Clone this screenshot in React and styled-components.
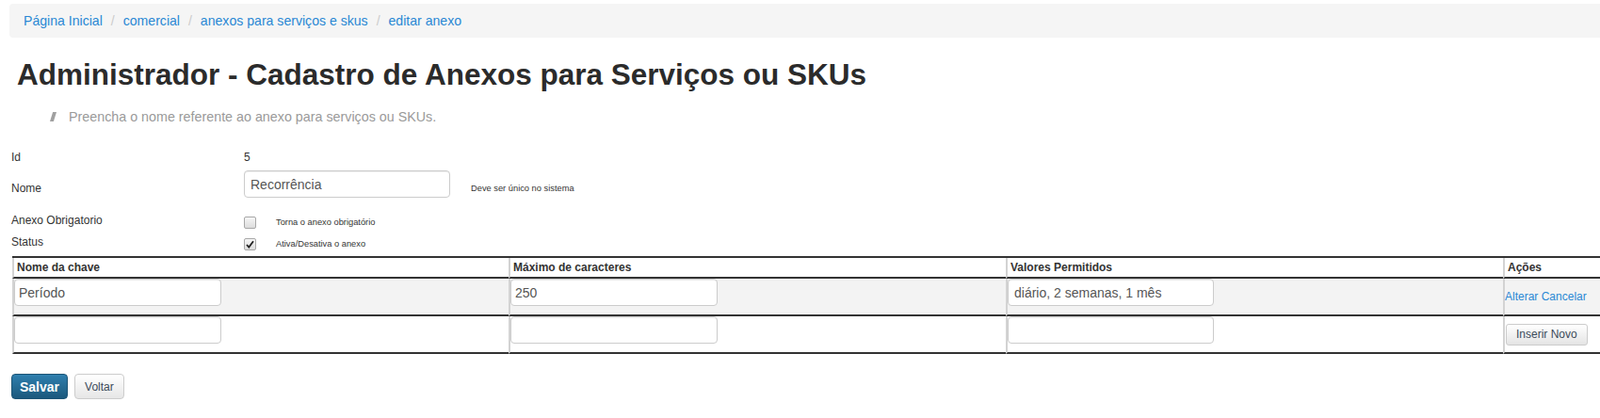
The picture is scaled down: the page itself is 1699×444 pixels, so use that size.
import React from "react";
import styled, { createGlobalStyle } from "styled-components";

const Global = createGlobalStyle`
  html { overflow: hidden; }
  body {
    margin: 0;
    background: #fff;
    font-family: "Liberation Sans", Arial, Helvetica, sans-serif;
    color: #333;
  }
  * { box-sizing: border-box; }
`;

const Page = styled.div`
  width: 2200px;
  padding: 4px 0 20px 10px;
`;

const Breadcrumb = styled.ol`
  list-style: none;
  margin: 0;
  padding: 8px 15px;
  width: 2100px;
  display: flex;
  background: #f5f5f5;
  border-radius: 4px;
  font-size: 14.1px;
  line-height: 20px;
`;

const Crumb = styled.li`
  & + &::before {
    content: "/\\00a0";
    padding: 0 5px 0 9px;
    color: #ccc;
  }
  a {
    color: #2a88d4;
    text-decoration: none;
  }
`;

const Title = styled.h1`
  margin: 22px 0 0;
  padding-left: 8px;
  font-size: 31.5px;
  line-height: 35px;
  font-weight: bold;
  color: #2b2b2b;
`;

const Lead = styled.p`
  margin: 17px 0 0;
  padding-left: 43px;
  display: flex;
  align-items: center;
  font-size: 14.3px;
  line-height: 20px;
  color: #9a9a9a;
`;

const LeadBar = styled.span`
  display: inline-block;
  width: 7px;
  height: 10px;
  margin-right: 13px;
  background: #a0a0a0;
  clip-path: polygon(45% 0, 100% 0, 55% 100%, 0 100%);
`;

const Form = styled.div`
  margin-top: 25px;
  padding-left: 2px;
`;

const FieldRow = styled.div`
  display: flex;
  align-items: ${(p) => p.$align || "flex-end"};
  margin-top: ${(p) => p.$mt || 0}px;
  min-height: 17px;
`;

const Label = styled.div`
  width: 247px;
  flex: none;
  font-size: 12px;
  line-height: 17px;
  margin-bottom: ${(p) => p.$mb || 0}px;
`;

const Value = styled.div`
  display: flex;
  align-items: flex-end;
  gap: ${(p) => p.$gap || 0}px;
  font-size: 12px;
  line-height: 17px;
`;

const Hint = styled.span`
  font-size: 9.3px;
  line-height: 13px;
  color: #333;
  margin-bottom: ${(p) => p.$mb || 0}px;
`;

const TextInput = styled.input`
  display: block;
  width: ${(p) => p.$w || 220}px;
  height: 29px;
  margin: 0 0 ${(p) => p.$mb || 0}px;
  padding: 0 ${(p) => p.$pad || 6}px;
  border: 1px solid #ccc;
  border-radius: 4px;
  background: #fff;
  box-shadow: inset 0 1px 1px rgba(0, 0, 0, 0.075);
  font-family: "Liberation Sans", Arial, sans-serif;
  font-size: 14px;
  color: #555;
  outline: none;
`;

const CheckBox = styled.span`
  display: inline-flex;
  align-items: center;
  justify-content: center;
  width: 13px;
  height: 13px;
  border: 1px solid #a8a8a8;
  border-radius: 2px;
  background: linear-gradient(#f6f6f6, #dcdcdc);
  flex: none;
`;

const Grid = styled.table`
  margin-top: 6px;
  margin-left: 3px;
  width: 2111px;
  table-layout: fixed;
  border-collapse: separate;
  border-spacing: 0;
  border-top: 2px solid #333;
  font-size: 12px;
`;

const HeadCell = styled.th`
  padding: 0 3px;
  height: 22px;
  line-height: 20px;
  text-align: left;
  font-weight: bold;
  color: #333;
  border-left: 2px solid #d3d3d3;
  border-bottom: 2px solid #333;
`;

const BodyRow = styled.tr`
  background: ${(p) => (p.$shaded ? "#f3f3f3" : "#fff")};
`;

const Cell = styled.td`
  padding: 0;
  vertical-align: middle;
  border-left: 2px solid #d3d3d3;
  border-bottom: 2px solid #333;
`;

const LinkAction = styled.a`
  color: #2a88d4;
  text-decoration: none;
  font-size: 12px;
`;

const SmallButton = styled.button`
  margin-left: 1px;
  height: 23px;
  padding: 0 10px;
  border: 1px solid #ccc;
  border-radius: 3px;
  background: linear-gradient(#ffffff, #e4e4e4);
  font-family: "Liberation Sans", Arial, sans-serif;
  font-size: 12px;
  color: #3b4b5a;
`;

const Actions = styled.div`
  display: flex;
  gap: 7px;
  margin-top: 21px;
  padding-left: 2px;
`;

const Button = styled.button`
  height: 27px;
  padding: 0 ${(p) => (p.$primary ? 8 : 10)}px;
  border-radius: 4px;
  border: 1px solid ${(p) => (p.$primary ? "#1c5476" : "#ccc")};
  background: ${(p) =>
    p.$primary
      ? "linear-gradient(#2f7fae, #1b587c)"
      : "linear-gradient(#ffffff, #e6e6e6)"};
  color: ${(p) => (p.$primary ? "#fff" : "#3b4b5a")};
  font-family: "Liberation Sans", Arial, sans-serif;
  font-size: ${(p) => (p.$primary ? 14 : 12)}px;
  font-weight: ${(p) => (p.$primary ? "bold" : "normal")};
`;

const Check = () => (
  <svg width="9" height="9" viewBox="0 0 9 9">
    <path d="M1 5 L3.3 7.6 L8 1.2" fill="none" stroke="#222" strokeWidth="1.8" />
  </svg>
);

const rows = [
  { key: "Período", max: "250", vals: "diário, 2 semanas, 1 mês", shaded: true },
  { key: "", max: "", vals: "", shaded: false },
];

export default function App() {
  return (
    <>
      <Global />
      <Page>
        <Breadcrumb>
          <Crumb><a href="#">Página Inicial</a></Crumb>
          <Crumb><a href="#">comercial</a></Crumb>
          <Crumb><a href="#">anexos para serviços e skus</a></Crumb>
          <Crumb><a href="#">editar anexo</a></Crumb>
        </Breadcrumb>

        <Title>Administrador - Cadastro de Anexos para Serviços ou SKUs</Title>
        <Lead>
          <LeadBar />
          Preencha o nome referente ao anexo para serviços ou SKUs.
        </Lead>

        <Form>
          <FieldRow>
            <Label>Id</Label>
            <Value>5</Value>
          </FieldRow>
          <FieldRow $mt={5}>
            <Label $mb={1}>Nome</Label>
            <Value $gap={22}>
              <TextInput $w={219} readOnly value="Recorrência" />
              <Hint $mb={3}>Deve ser único no sistema</Hint>
            </Value>
          </FieldRow>
          <FieldRow $mt={16}>
            <Label>Anexo Obrigatorio</Label>
            <Value $gap={21}>
              <CheckBox />
              <Hint>Torna o anexo obrigatório</Hint>
            </Value>
          </FieldRow>
          <FieldRow $mt={6}>
            <Label>Status</Label>
            <Value $gap={21}>
              <CheckBox>
                <Check />
              </CheckBox>
              <Hint>Ativa/Desativa o anexo</Hint>
            </Value>
          </FieldRow>
        </Form>

        <Grid>
          <colgroup>
            <col style={{ width: 527 }} />
            <col style={{ width: 528 }} />
            <col style={{ width: 528 }} />
            <col style={{ width: 528 }} />
          </colgroup>
          <thead>
            <tr>
              <HeadCell>Nome da chave</HeadCell>
              <HeadCell>Máximo de caracteres</HeadCell>
              <HeadCell>Valores Permitidos</HeadCell>
              <HeadCell>Ações</HeadCell>
            </tr>
          </thead>
          <tbody>
            {rows.map((r, i) => (
              <BodyRow key={i} $shaded={r.shaded}>
                <Cell>
                  <TextInput $pad={4} $mb={9} readOnly value={r.key} />
                </Cell>
                <Cell>
                  <TextInput $pad={4} $mb={9} readOnly value={r.max} />
                </Cell>
                <Cell>
                  <TextInput $pad={6} $mb={9} $w={219} readOnly value={r.vals} />
                </Cell>
                <Cell>
                  {r.shaded ? (
                    <>
                      <LinkAction href="#">Alterar</LinkAction>{" "}
                      <LinkAction href="#">Cancelar</LinkAction>
                    </>
                  ) : (
                    <SmallButton>Inserir Novo</SmallButton>
                  )}
                </Cell>
              </BodyRow>
            ))}
          </tbody>
        </Grid>

        <Actions>
          <Button $primary>Salvar</Button>
          <Button>Voltar</Button>
        </Actions>
      </Page>
    </>
  );
}
